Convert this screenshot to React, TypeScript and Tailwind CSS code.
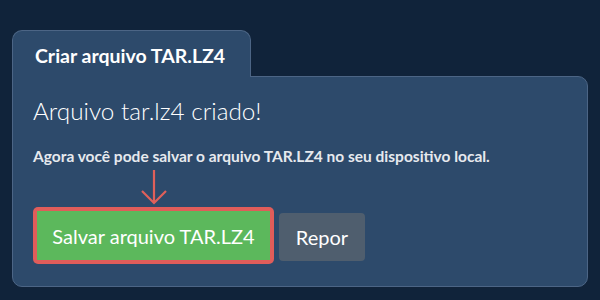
import React from 'react'

const App: React.FC = () => {
  return (
    <div className="w-[600px] h-[300px] bg-[#10233a] px-3 pt-[30px] font-['Lato',sans-serif] overflow-hidden">
      <div className="relative z-10 -mb-px inline-flex h-[47px] w-[239px] items-center rounded-t-[10px] border border-b-0 border-[#4c6585] bg-[#2d4a6b] pl-[22px] pt-[3px]">
        <span className="text-[19.5px] font-bold text-white">Criar arquivo TAR.LZ4</span>
      </div>
      <div className="h-[211px] w-[576px] rounded-b-[10px] rounded-tr-[10px] border border-[#4c6585] bg-[#2d4a6b] pl-5 pt-[18px]">
        <h2 className="text-[24.3px] font-light leading-[32px] text-white whitespace-nowrap">Arquivo tar.lz4 criado!</h2>
        <p className="mt-[19px] text-[15.5px] font-bold leading-5 text-[#e6e9ee] whitespace-nowrap">
          Agora você pode salvar o arquivo TAR.LZ4 no seu dispositivo local.
        </p>
        <div className="mt-[3px] flex items-end gap-[5px]">
          <div className="flex flex-col items-center">
            <svg width="28" height="36" viewBox="0 0 28 36" className="mb-[2px]">
              <path d="M14 1 V34 M2 22 L14 34 L26 22" fill="none" stroke="#e0605a" strokeWidth="2.2" />
            </svg>
            <div className="rounded-[5px] bg-[#e05d5a] p-1">
              <button className="h-[49px] w-[233px] bg-[#5cb85c] text-[20px] text-white">Salvar arquivo TAR.LZ4</button>
            </div>
          </div>
          <button className="mb-[3px] h-[48px] w-[86px] shrink-0 rounded-[4px] bg-[#4f5e6e] text-[20px] text-white">Repor</button>
        </div>
      </div>
    </div>
  )
}

export default App
